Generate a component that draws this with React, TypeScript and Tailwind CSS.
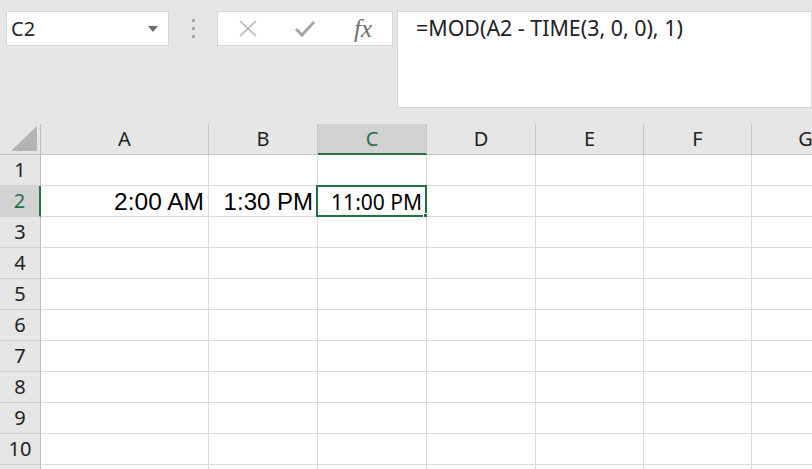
import React from 'react';

const cols = [
  { label: 'A', w: 'w-[168px]' },
  { label: 'B', w: 'w-[109px]' },
  { label: 'C', w: 'w-[109px]' },
  { label: 'D', w: 'w-[109px]' },
  { label: 'E', w: 'w-[108px]' },
  { label: 'F', w: 'w-[108px]' },
  { label: 'G', w: 'w-[108px]' },
];

const rows = [1, 2, 3, 4, 5, 6, 7, 8, 9, 10, 11];

const ui = "font-['Noto_Sans','Open_Sans',sans-serif]";

function Cell({ row, col }: { row: number; col: string }) {
  if (row === 2 && col === 'A') {
    return <span className="font-['Liberation_Sans',Arial,sans-serif] text-[24.5px] leading-none text-black pr-[4px] pt-[2px]">2:00 AM</span>;
  }
  if (row === 2 && col === 'B') {
    return <span className="font-['Liberation_Sans',Arial,sans-serif] text-[24px] leading-none text-black pr-[4px] pt-[2px]">1:30 PM</span>;
  }
  if (row === 2 && col === 'C') {
    return (
      <>
        <span className={`${ui} text-[21px] leading-none text-black pr-[4px] pt-[3px]`}>11:00 PM</span>
        <div className="absolute left-[-2px] top-[-1px] right-[-1px] bottom-[-1px] border-2 border-[#217346]" />
        <div className="absolute right-[-3px] bottom-[-3px] w-[6px] h-[6px] bg-[#217346] border border-white" />
      </>
    );
  }
  return null;
}

export default function App() {
  return (
    <div className={`w-[812px] h-[469px] bg-[#e6e6e6] overflow-hidden ${ui}`}>
      {/* formula bar area */}
      <div className="h-[124px] flex items-start pt-[11px]">
        <div className="ml-[6px] w-[163px] h-[35px] bg-white border border-[#d6d6d6] flex items-center justify-between pl-[4px] pr-[10px]">
          <span className="text-[20px] text-[#262626] leading-none">C2</span>
          <svg width="10" height="6" viewBox="0 0 10 6"><path d="M0 0h10L5 6z" fill="#6d6d6d" /></svg>
        </div>
        <div className="w-[48px] flex flex-col items-center gap-[5px] pt-[8px]">
          <div className="w-[3px] h-[3px] bg-[#a6a6a6]" />
          <div className="w-[3px] h-[3px] bg-[#a6a6a6]" />
          <div className="w-[3px] h-[3px] bg-[#a6a6a6]" />
        </div>
        <div className="w-[176px] h-[35px] bg-white border border-[#d6d6d6] flex items-center">
          <div className="w-[58px] flex justify-center pl-[2px]">
            <svg width="20" height="17" viewBox="0 0 20 17"><path d="M2 1L18 16M18 1L2 16" stroke="#b5b5b5" strokeWidth="1.6" fill="none" /></svg>
          </div>
          <div className="w-[58px] flex justify-center">
            <svg width="22" height="17" viewBox="0 0 22 17"><path d="M2 9L8 15L20 2" stroke="#a6a6a6" strokeWidth="3" fill="none" /></svg>
          </div>
          <div className="w-[58px] flex justify-center">
            <span className="font-['Liberation_Serif','Times_New_Roman',serif] italic text-[25px] text-[#6f6f6f] leading-none">fx</span>
          </div>
        </div>
        <div className="ml-[4px] flex-1 h-[97px] bg-white border border-[#d6d6d6] pl-[18px] pt-[5px]">
          <span className="text-[21.4px] leading-none text-[#222]">=MOD(A2 - TIME(3, 0, 0), 1)</span>
        </div>
      </div>

      {/* grid */}
      <div className="flex flex-col">
        <div className="flex h-[31px]">
          <div className="w-[41px] shrink-0 border-r border-b border-[#bdbdbd] flex items-end justify-end pr-[3px] pb-[3px]">
            <svg width="26" height="25" viewBox="0 0 26 25"><path d="M26 0V25H0z" fill="#b4b4b4" /></svg>
          </div>
          {cols.map((c) => (
            <div
              key={c.label}
              className={`${c.w} shrink-0 flex items-center justify-center text-[20px] ${
                c.label === 'C'
                  ? 'bg-[#d2d2d2] text-[#217346] border-b-2 border-[#217346] border-r border-r-[#c6c6c6]'
                  : 'text-[#222] border-r border-b border-[#c6c6c6]'
              }`}
            >
              {c.label}
            </div>
          ))}
        </div>
        {rows.map((r) => (
          <div key={r} className="flex h-[31px]">
            <div
              className={`w-[41px] shrink-0 flex items-center justify-center text-[20px] border-b border-b-[#d0d0d0] ${
                r === 2
                  ? 'bg-[#d2d2d2] text-[#217346] border-r-2 border-r-[#217346]'
                  : 'text-[#222] border-r border-r-[#bdbdbd]'
              }`}
            >
              {r < 11 ? r : ''}
            </div>
            {cols.map((c) => (
              <div
                key={c.label}
                className={`${c.w} shrink-0 relative bg-white border-r border-b border-[#dadada] flex items-center justify-end`}
              >
                <Cell row={r} col={c.label} />
              </div>
            ))}
          </div>
        ))}
      </div>
    </div>
  );
}
